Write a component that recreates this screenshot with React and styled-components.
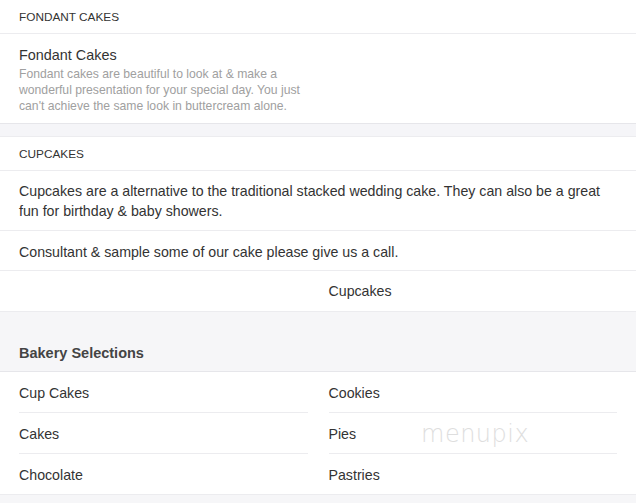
import React from 'react';
import styled, { createGlobalStyle } from 'styled-components';

const Global = createGlobalStyle`
  body {
    margin: 0;
    background: #f6f6f8;
    font-family: "Liberation Sans", Arial, sans-serif;
    color: #333;
  }
`;

const Page = styled.div`
  width: 636px;
  background: #f6f6f8;
  position: relative;
`;

const SectionTitle = styled.div`
  background: #fff;
  height: 31px;
  padding-top: 2px;
  line-height: 31px;
  padding-left: 19px;
  padding-right: 19px;
  font-size: 11.8px;
  text-transform: uppercase;
  color: #333;
  border-bottom: 1px solid #ececef;
`;

const Item = styled.div`
  background: #fff;
  padding: 11px 19px 9px;
  border-bottom: 1px solid #e6e6ea;
`;

const ItemBody = styled.div`
  width: 289px;
`;

const ItemName = styled.div`
  font-size: 14.4px;
  line-height: 21px;
  color: #333;
`;

const ItemDesc = styled.div`
  font-size: 12.2px;
  line-height: 16px;
  color: #a0a0a0;
`;

const Spacer = styled.div`
  height: 12px;
  background: #f5f5f8;
  border-bottom: 1px solid #ececef;
`;

const Para = styled.div`
  background: #fff;
  padding: ${p => (p.$short ? '11px 22px 8px 19px' : '10px 22px 9px 19px')};
  font-size: 14.2px;
  line-height: 20px;
  color: #333;
  border-bottom: 1px solid #ececef;
`;

const Columns = styled.div`
  display: grid;
  grid-template-columns: 1fr 1fr;
  column-gap: 21px;
  padding: 0 19px;
  background: #fff;
  border-bottom: 1px solid #ececef;
`;

const Cell = styled.div`
  font-size: 14.2px;
  line-height: 20px;
  padding: ${p => (p.$even ? '10px 0 10px' : '11px 0 9px')};
  color: #333;
  border-bottom: 1px solid ${p => (p.$line ? '#ececef' : 'transparent')};

  &:nth-last-child(-n + 2) {
    border-bottom: none;
  }
`;

const GroupHead = styled.div`
  padding: 31px 19px 8px;
  font-size: 14.5px;
  line-height: 20px;
  font-weight: bold;
  color: #444;
  border-bottom: 1px solid #e6e6ea;
`;

const Watermark = styled.div`
  position: absolute;
  left: 421px;
  top: 420px;
  font-family: "DejaVu Sans", sans-serif;
  font-weight: 200;
  font-size: 24px;
  letter-spacing: 0.5px;
  color: #dedede;
  pointer-events: none;
`;

const selections = ['Cup Cakes', 'Cookies', 'Cakes', 'Pies', 'Chocolate', 'Pastries'];

export default function App() {
  return (
    <Page>
      <Global />
      <SectionTitle>Fondant Cakes</SectionTitle>
      <Item>
        <ItemBody>
          <ItemName>Fondant Cakes</ItemName>
          <ItemDesc>
            Fondant cakes are beautiful to look at &amp; make a wonderful presentation for your
            special day. You just can't achieve the same look in buttercream alone.
          </ItemDesc>
        </ItemBody>
      </Item>
      <Spacer />
      <SectionTitle>Cupcakes</SectionTitle>
      <Para>
        Cupcakes are a alternative to the traditional stacked wedding cake. They can also be a great
        fun for birthday &amp; baby showers.
      </Para>
      <Para $short>Consultant &amp; sample some of our cake please give us a call.</Para>
      <Columns>
        <Cell $even />
        <Cell $even>Cupcakes</Cell>
      </Columns>
      <GroupHead>Bakery Selections</GroupHead>
      <Columns>
        {selections.map(name => (
          <Cell key={name} $line>
            {name}
          </Cell>
        ))}
      </Columns>
      <Watermark>menupix</Watermark>
      <div style={{ height: 8 }} />
    </Page>
  );
}
